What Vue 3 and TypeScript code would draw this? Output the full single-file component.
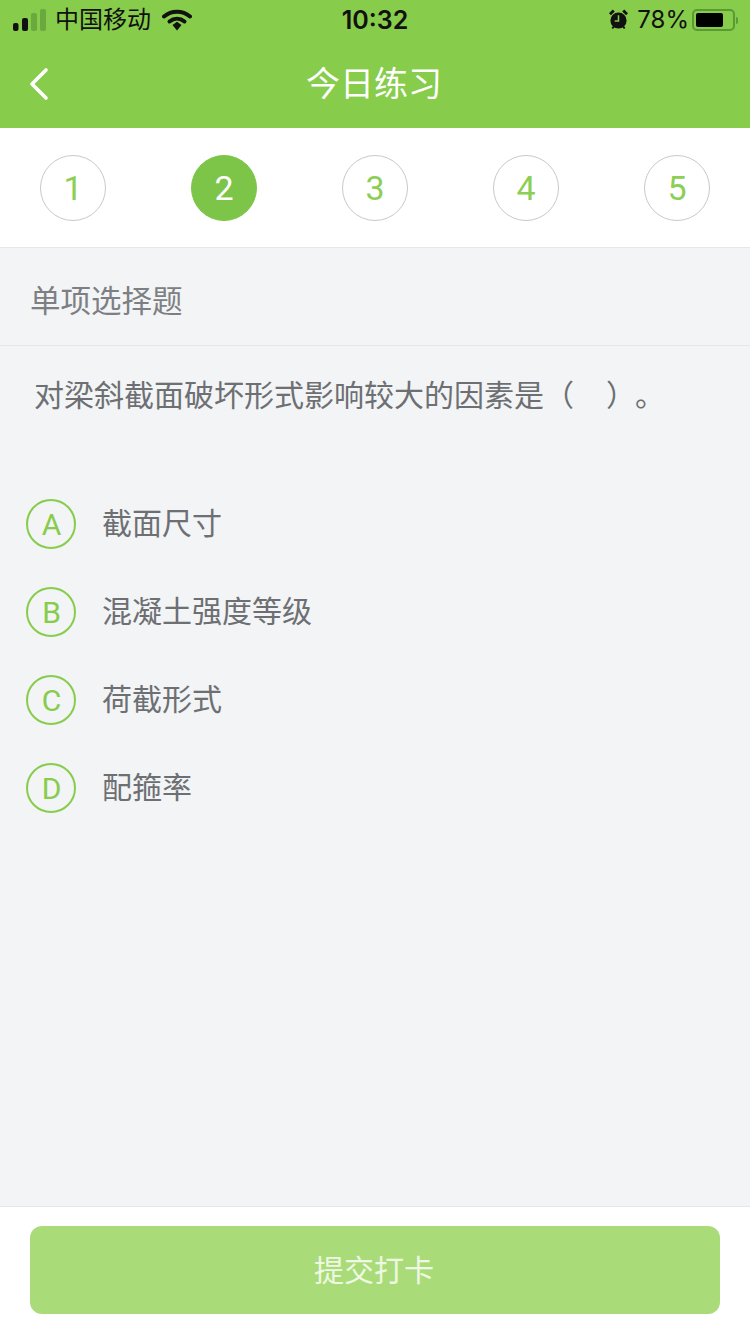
<template>
  <div class="page">
    <header class="head">
      <div class="status">
        <div class="statusLeft">
          <svg class="signal" width="33" height="22" viewBox="0 0 33 22">
            <rect x="0" y="14" width="5.5" height="8" rx="2" fill="#111" />
            <rect x="9" y="9" width="6" height="13" rx="2" fill="#111" />
            <rect x="18" y="4" width="6" height="18" rx="2" fill="#69a93f" />
            <rect x="27" y="0" width="6" height="22" rx="2" fill="#69a93f" />
          </svg>
          <span class="carrier">中国移动</span>
          <svg class="wifi" width="30" height="22" viewBox="0 0 30 22">
            <path d="M2 7.5C9.5 1 20.5 1 28 7.5" fill="none" stroke="#111" stroke-width="4" stroke-linecap="round" />
            <path d="M7.5 12.5C12 8.8 18 8.8 22.5 12.5" fill="none" stroke="#111" stroke-width="4" stroke-linecap="round" />
            <path d="M10.5 16L15 12.8L19.5 16L15 21.5Z" fill="#111" />
          </svg>
        </div>
        <span class="time">10:32</span>
        <div class="statusRight">
          <svg class="alarm" width="19" height="21" viewBox="0 0 20 22">
            <circle cx="10" cy="12" r="8.5" fill="#111" />
            <path d="M1 5.5L5 1.5M19 5.5L15 1.5" stroke="#111" stroke-width="3" />
            <path d="M3.5 20.5L5 18.5M16.5 20.5L15 18.5" stroke="#111" stroke-width="2" />
            <path d="M10 6.5V12.5H6" fill="none" stroke="#87cc4b" stroke-width="1.6" />
          </svg>
          <span class="percent">78%</span>
          <div class="battery">
            <div class="batteryLevel" :style="{ width: '78%' }"></div>
          </div>
          <div class="batteryCap"></div>
        </div>
      </div>
      <div class="navbar">
        <svg class="back" width="20" height="34" viewBox="0 0 20 34">
          <path d="M17 3L3 17L17 31" fill="none" stroke="#fff" stroke-width="3.6" stroke-linecap="round" stroke-linejoin="round" />
        </svg>
        <h1 class="title">今日练习</h1>
      </div>
    </header>

    <nav class="steps">
      <div v-for="n in steps" :key="n" class="step" :class="{ 'step--on': n === current }">{{ n }}</div>
    </nav>

    <main class="body">
      <div class="kind">单项选择题</div>
      <p class="question">对梁斜截面破坏形式影响较大的因素是（<span class="gap"></span>）<span class="stop">。</span></p>
      <ul class="options">
        <li v-for="o in options" :key="o.key" class="option">
          <span class="letter">{{ o.key }}</span>
          <span class="optionText">{{ o.text }}</span>
        </li>
      </ul>
    </main>

    <footer class="foot">
      <button class="submit">提交打卡</button>
    </footer>
  </div>
</template>

<script setup lang="ts">
const steps = [1, 2, 3, 4, 5]
const current = 2
const options = [
  { key: 'A', text: '截面尺寸' },
  { key: 'B', text: '混凝土强度等级' },
  { key: 'C', text: '荷截形式' },
  { key: 'D', text: '配箍率' },
]
</script>

<style>
html, body { margin: 0; background: #f2f4f6; }
</style>

<style scoped>
.page { width: 750px; height: 1334px; display: flex; flex-direction: column; background: #f2f4f6; font-family: "Roboto", "Noto Sans CJK SC", sans-serif; overflow: hidden; }
.head { height: 128px; background: #87cc4b; flex: none; }
.status { height: 40px; padding: 0 12px 0 13px; display: flex; align-items: center; justify-content: space-between; position: relative; color: #111; }
.statusLeft { display: flex; align-items: center; }
.signal { margin-top: -1px; }
.carrier { margin-left: 9px; font-size: 24px; line-height: 40px; }
.wifi { margin-left: 11px; }
.time { position: absolute; left: 0; right: 0; text-align: center; font-size: 25px; font-weight: 600; font-family: "Inter", "Roboto", sans-serif; line-height: 41px; }
.statusRight { display: flex; align-items: center; }
.alarm { margin-top: -2px; }
.percent { margin-left: 9px; font-size: 24px; line-height: 40px; font-family: "Inter", "Roboto", sans-serif; font-weight: 400; }
.battery { margin-left: 3px; box-sizing: border-box; width: 43px; height: 22px; border: 2px solid #5a9a35; border-radius: 5px; padding: 2px; margin-top: -1px; }
.batteryLevel { height: 100%; background: #000; border-radius: 2px; }
.batteryCap { width: 2px; height: 7px; background: #5a9a35; margin-left: 1px; border-radius: 0 2px 2px 0; }
.navbar { height: 88px; position: relative; display: flex; align-items: center; justify-content: center; }
.back { position: absolute; left: 29px; top: 27px; }
.title { margin: 0 2px 0 0; color: #fff; font-size: 34px; font-weight: 400; line-height: 88px; }
.steps { height: 120px; box-sizing: border-box; background: #fff; border-bottom: 1px solid #e6e7e9; padding: 0 40px; display: flex; align-items: center; justify-content: space-between; flex: none; }
.step { width: 66px; height: 66px; box-sizing: border-box; border: 1px solid #c9c9c9; border-radius: 50%; color: #8ccf55; font-size: 34px; display: flex; align-items: center; justify-content: center; }
.step--on { background: #7dc548; border-color: #7dc548; color: #fff; }
.body { flex: 1; min-height: 0; }
.kind { height: 98px; box-sizing: border-box; border-bottom: 1px solid #e6e7e9; padding-left: 30px; color: #7d7f82; font-size: 30.5px; line-height: 108px; }
.question { margin: 0; padding: 0 34px; color: #6d6f72; font-size: 30px; line-height: 100px; white-space: nowrap; }
.gap { display: inline-block; width: 32px; }
.stop { margin-left: 14px; }
.options { list-style: none; margin: 34px 0 0; padding: 0 0 0 26px; display: grid; grid-auto-rows: 88px; }
.option { display: flex; align-items: center; }
.letter { width: 50px; height: 50px; box-sizing: border-box; border: 2px solid #87cc4b; border-radius: 50%; padding-left: 1px; color: #87cc4b; font-size: 30px; display: flex; align-items: center; justify-content: center; }
.optionText { margin: -6px 0 0 26px; color: #6d6f72; font-size: 30px; }
.foot { height: 128px; box-sizing: border-box; flex: none; background: #fff; border-top: 1px solid #e6e7e9; padding: 19px 30px 0; }
.submit { display: block; width: 100%; height: 88px; border: 0; border-radius: 12px; background: #a9dc78; color: #eef8e4; font-family: inherit; font-size: 30px; padding: 0 2px 4px 0; }
</style>
